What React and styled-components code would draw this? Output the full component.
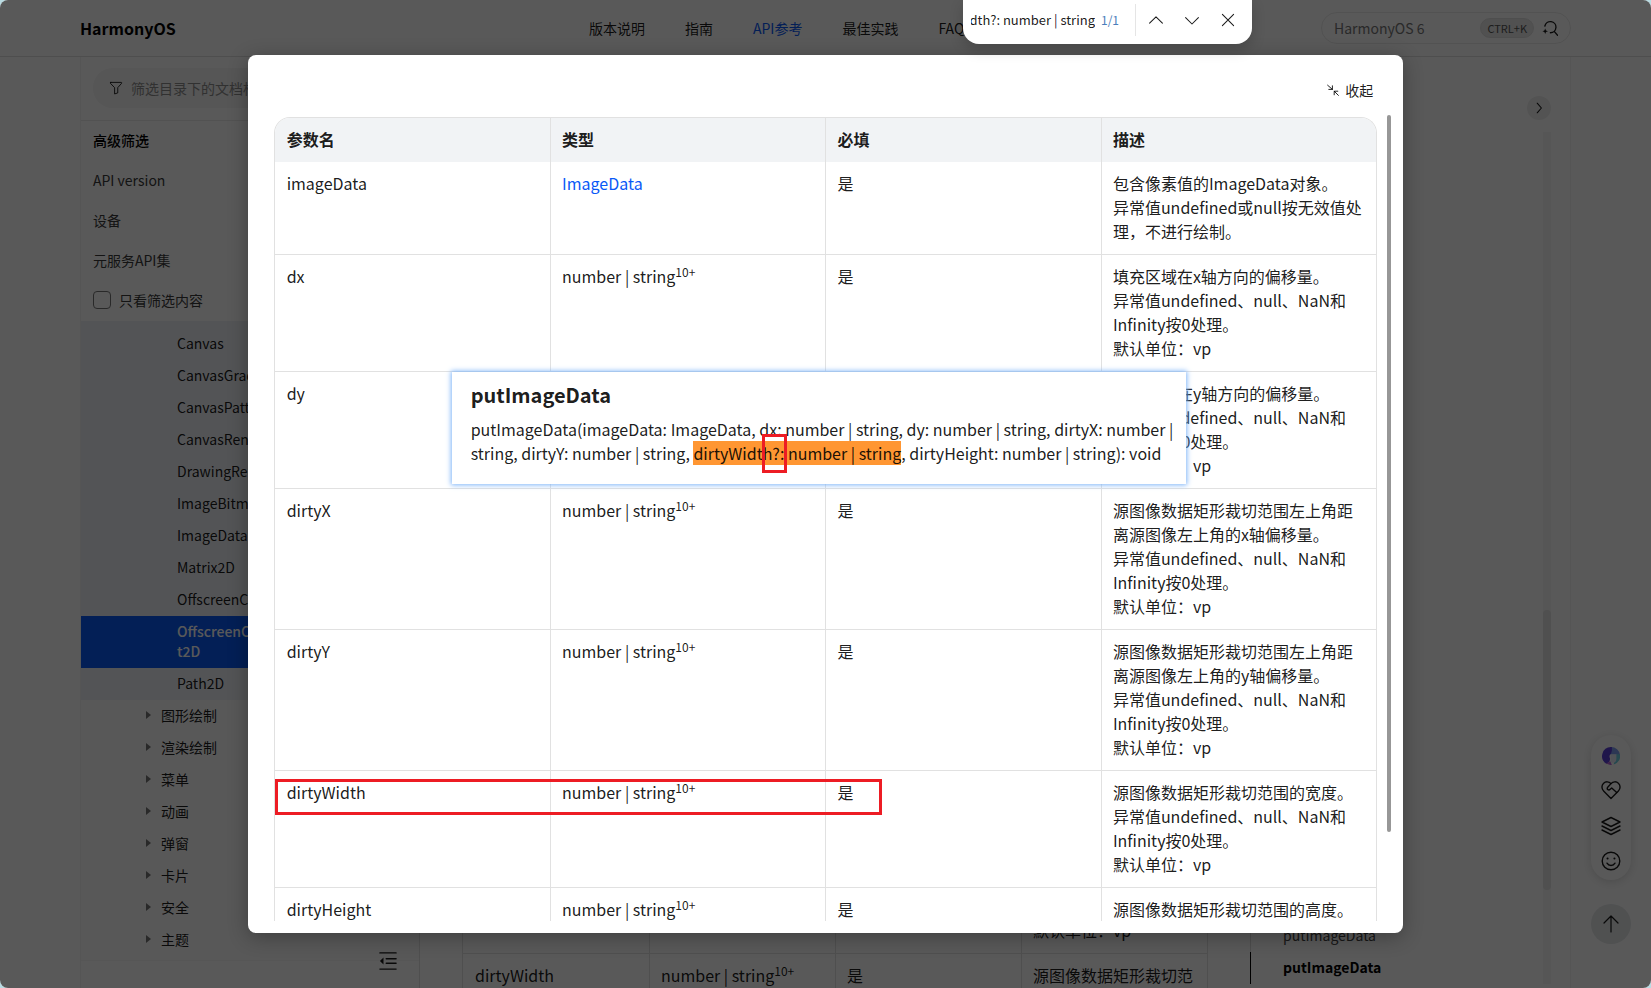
import React, { useState } from "react";
import styled, { createGlobalStyle } from "styled-components";

const GlobalStyle = createGlobalStyle`
  * {
    box-sizing: border-box;
  }

  html,
  body,
  #root {
    height: 100%;
    margin: 0;
  }

  body {
    background-color: #b9dbe2;
    color: rgba(0, 0, 0, 0.9);
    font-family: "Noto Sans CJK SC", "Noto Sans", sans-serif;
    font-size: 14px;
    line-height: 20px;
    overflow: hidden;
  }

  button,
  input {
    font: inherit;
    color: inherit;
  }

  a {
    color: inherit;
    text-decoration: none;
  }
`;

const Page = styled.div`
  position: relative;
  display: flex;
  flex-direction: column;
  height: 100vh;
  border-radius: 8px;
  background-color: #fff;
  overflow: hidden;
`;

const IconButton = styled.button`
  display: flex;
  align-items: center;
  justify-content: center;
  padding: 0;
  border: none;
  background: none;
  cursor: pointer;
`;

/* ---------- header ---------- */

const Header = styled.header`
  display: flex;
  align-items: center;
  flex-shrink: 0;
  height: 57px;
  padding: 0 80px;
  border-bottom: 1px solid #e0e0e0;
`;

const Logo = styled.a`
  flex: 0 0 509px;
  font-size: 16px;
  font-weight: 700;
  color: #000;
`;

const Nav = styled.nav`
  display: flex;
  gap: 40px;
`;

const NavLink = styled.a`
  white-space: nowrap;
  color: ${(props) => (props.$active ? "#0a59f7" : "inherit")};
`;

const Search = styled.div`
  display: flex;
  align-items: center;
  gap: 8px;
  width: 250px;
  height: 32px;
  margin-left: auto;
  padding: 0 12px;
  border: 1px solid #eaeaea;
  border-radius: 16px;

  input {
    flex: 1;
    min-width: 0;
    padding: 0;
    border: none;
    outline: none;
    background: none;
  }

  input::placeholder {
    color: #777;
    opacity: 1;
  }
`;

const Shortcut = styled.kbd`
  padding: 0 6px;
  border: 1px solid #e0e0e0;
  border-radius: 10px;
  background-color: #e7e7e7;
  font: inherit;
  font-size: 11px;
  line-height: 18px;
  color: #555;
`;

/* ---------- sidebar ---------- */

const Container = styled.div`
  display: flex;
  flex: 1;
  min-height: 0;
  margin: 0 80px;
  border: solid #f4f4f4;
  border-width: 0 1px;
`;

const Sidebar = styled.aside`
  position: relative;
  display: flex;
  flex-direction: column;
  flex: 0 0 339px;
  border-right: 1px solid #e2e2e2;
`;

const FilterArea = styled.div`
  padding: 11px 12px 12px;
  border-bottom: 1px solid #ececec;
`;

const FilterBox = styled.label`
  display: flex;
  align-items: center;
  gap: 8px;
  height: 40px;
  padding: 0 16px;
  border-radius: 20px;
  background-color: #f5f5f5;

  input {
    flex: 1;
    min-width: 0;
    padding: 0;
    border: none;
    outline: none;
    background: none;
  }

  input::placeholder {
    color: #8e8e8e;
    opacity: 1;
  }
`;

const FilterRow = styled.div`
  display: flex;
  align-items: center;
  flex-shrink: 0;
  height: 40px;
  padding: 0 12px 2px;
  font-weight: ${(props) => (props.$title ? 500 : 400)};
  color: ${(props) => (props.$title ? "#000" : "#3a3a3a")};

  label {
    display: flex;
    align-items: center;
    gap: 8px;
  }

  input {
    appearance: none;
    width: 18px;
    height: 18px;
    margin: 0;
    border: 1px solid #777;
    border-radius: 4px;
  }
`;

const Tree = styled.ul`
  flex: 1;
  min-height: 0;
  margin: 0 0 27px;
  padding: 0;
  border-bottom: 1px solid #f7f7f7;
  background-color: #fbfbfb;
  list-style: none;
  overflow: hidden;
`;

const TreeGroup = styled.ul`
  margin: 0;
  padding: 7px 0 0;
  background-color: #edf0f5;
  list-style: none;
`;

const TreeLeaf = styled.li`
  padding: 5px 12px 7px 96px;
  background-color: ${(props) => (props.$active ? "#0a59f7" : "transparent")};
  font-weight: ${(props) => (props.$active ? 500 : 400)};
  color: ${(props) => (props.$active ? "#fff" : "inherit")};
  word-break: break-all;
`;

const TreeBranch = styled.li`
  display: flex;
  align-items: center;
  gap: 10px;
  height: 32px;
  padding: 0 0 2px 65px;

  &::before {
    content: "";
    border: solid transparent;
    border-width: 4px 0 4px 5px;
    border-left-color: #777;
  }
`;

const CollapseButton = styled(IconButton)`
  position: absolute;
  right: 22px;
  bottom: 18px;
`;

/* ---------- article behind the dialog ---------- */

const Main = styled.main`
  display: flex;
  flex-direction: column;
  justify-content: flex-end;
  flex: 1;
  min-width: 0;
  padding: 0 42px;
  overflow: hidden;
`;

const Toc = styled.nav`
  display: flex;
  flex-direction: column;
  justify-content: flex-end;
  flex: 0 0 277px;
  padding-bottom: 4px;
`;

const TocLink = styled.a`
  padding: 5px 0 7px 32px;
  border-left: 1px solid ${(props) => (props.$active ? "#000" : "#dcdcdc")};
  font-weight: ${(props) => (props.$active ? 700 : 400)};
  color: ${(props) => (props.$active ? "#000" : "#444")};
`;

const TocTools = styled.div`
  display: flex;
  flex-direction: column;
  align-items: flex-end;
  gap: 12px;
  width: 24px;
  margin-right: 19px;
  padding: 39px 0 4px;
`;

const TocToggle = styled(IconButton)`
  width: 24px;
  height: 24px;
  border-radius: 50%;
  background-color: #eee;
`;

const TocTrack = styled.div`
  display: flex;
  flex-direction: column;
  justify-content: flex-end;
  flex: 1;
  width: 8px;
  padding-bottom: 94px;
  background-color: #f7f7f7;

  &::after {
    content: "";
    height: 37%;
    border-radius: 4px;
    background-color: #e4e4e4;
  }
`;

const SideTools = styled.div`
  position: absolute;
  right: 20px;
  bottom: 44px;
  display: flex;
  flex-direction: column;
  gap: 24px;
`;

const ToolStack = styled.div`
  display: flex;
  flex-direction: column;
  align-items: center;
  justify-content: space-between;
  width: 40px;
  height: 145px;
  padding: 12px 0 9px;
  border-radius: 20px;
  background-color: #fff;
  box-shadow: 0 2px 10px rgba(0, 0, 0, 0.15);
`;

const TopButton = styled(IconButton)`
  width: 40px;
  height: 40px;
  border-radius: 50%;
  background-color: #e4e7e9;
`;

/* ---------- parameter table ---------- */

const Table = styled.table`
  width: 100%;
  table-layout: fixed;
  border: solid #e1e1e1;
  border-width: 1px 1px 0;
  border-radius: ${(props) => (props.$rounded ? "16px 16px 0 0" : "0")};
  border-collapse: separate;
  border-spacing: 0;
  font-size: 16px;
  line-height: 24px;
  overflow: hidden;

  th,
  td {
    padding: 9px 11px 11px 12px;
    text-align: left;
    vertical-align: top;
  }

  th {
    background-color: #f1f3f5;
    font-weight: 700;
  }

  td {
    border-bottom: 1px solid #e1e1e1;
  }

  th + th,
  td + td {
    padding-left: 11px;
    border-left: 1px solid #e1e1e1;
  }

  tr.cut td {
    padding-bottom: 1px;
    border-bottom: none;
  }

  a {
    color: #0a59f7;
  }

  sup {
    font-size: 12px;
    line-height: 0;
    vertical-align: 6px;
  }
`;

/* ---------- dialog ---------- */

const Overlay = styled.div`
  position: absolute;
  inset: 0;
  padding: 55px 15%;
  background-color: rgba(0, 0, 0, 0.65);
`;

const Dialog = styled.section`
  position: relative;
  display: flex;
  flex-direction: column;
  height: 100%;
  border-radius: 8px;
  background-color: #fff;
  box-shadow: 0 4px 20px rgba(0, 0, 0, 0.3);
`;

const DialogHeader = styled.div`
  display: flex;
  justify-content: flex-end;
  padding: 25px 30px 15px;

  button {
    gap: 6px;
  }
`;

const DialogBody = styled.div`
  display: flex;
  gap: 10px;
  flex: 1;
  min-height: 0;
  padding: 0 12px 12px 26px;
`;

const TableScroll = styled.div`
  flex: 1;
  padding-top: 2px;
  overflow: hidden;
`;

const ScrollThumb = styled.div`
  width: 4px;
  height: 89%;
  border-radius: 2px;
  background-color: #979797;
`;

const Signature = styled.div`
  position: absolute;
  top: 317px;
  left: 204px;
  width: 734px;
  height: 112px;
  padding: 9px 8px 0 19px;
  background-color: #fff;
  box-shadow: 0 0 5px 1px #7eb4f8;
  font-size: 16px;
  line-height: 24px;

  h4 {
    margin: 0 0 8px;
    font-size: 20px;
    line-height: 28px;
  }

  p {
    margin: 0;
  }

  mark {
    background-color: #ff9632;
    color: inherit;
  }
`;

const RowMark = styled.div`
  position: absolute;
  top: 724px;
  left: 27px;
  width: 607px;
  height: 36px;
  border: 3px solid #ed1c24;
`;

const CharMark = styled.div`
  position: absolute;
  top: 62px;
  left: 310px;
  width: 25px;
  height: 39px;
  border: 3px solid #ed1c24;
`;

/* ---------- find bar ---------- */

const FindBar = styled.div`
  position: absolute;
  top: 0;
  right: 399px;
  display: flex;
  align-items: center;
  width: 289px;
  height: 44px;
  padding: 0 14px 4px 8px;
  border-radius: 0 0 16px 16px;
  background-color: #fff;
  box-shadow: 0 6px 14px rgba(0, 0, 0, 0.18);
  font-size: 13px;

  output {
    margin-left: 6px;
    font-size: 12px;
    color: #4a7ebb;
  }
`;

const FindText = styled.div`
  display: flex;
  justify-content: flex-end;
  width: 124px;
  overflow: hidden;
  white-space: nowrap;
`;

const FindButtons = styled.div`
  display: flex;
  justify-content: space-between;
  flex: 1;
  margin-left: 16px;
  padding: 8px 2px 8px 12px;
  border-left: 1px solid #e5e5e5;
`;

const navItems = ["版本说明", "指南", "API参考", "最佳实践", "FAQ"];

const filters = ["API version", "设备", "元服务API集"];

const leaves = [
  "Canvas",
  "CanvasGradient",
  "CanvasPattern",
  "CanvasRenderingContext2D",
  "DrawingRenderingContext",
  "ImageBitmap",
  "ImageData",
  "Matrix2D",
  "OffscreenCanvas",
  "OffscreenCanvasRenderingContext2D",
  "Path2D",
];

const branches = ["图形绘制", "渲染绘制", "菜单", "动画", "弹窗", "卡片", "安全", "主题"];

const invalid = "异常值undefined、null、NaN和Infinity按0处理。";
const unit = "默认单位：vp";

const params = [
  {
    name: "imageData",
    link: "ImageData",
    desc: ["包含像素值的ImageData对象。", "异常值undefined或null按无效值处理，不进行绘制。"],
  },
  { name: "dx", desc: ["填充区域在x轴方向的偏移量。", invalid, unit] },
  { name: "dy", desc: ["填充区域在y轴方向的偏移量。", invalid, unit] },
  { name: "dirtyX", desc: ["源图像数据矩形裁切范围左上角距离源图像左上角的x轴偏移量。", invalid, unit] },
  { name: "dirtyY", desc: ["源图像数据矩形裁切范围左上角距离源图像左上角的y轴偏移量。", invalid, unit] },
  { name: "dirtyWidth", desc: ["源图像数据矩形裁切范围的宽度。", invalid, unit] },
  { name: "dirtyHeight", desc: ["源图像数据矩形裁切范围的高度。", invalid, unit] },
];

const pageParams = [
  params[4],
  { name: "dirtyWidth", desc: ["源图像数据矩形裁切范"], cut: true },
];

const Svg = ({ size = 20, width = 1, children }) => (
  <svg
    width={size}
    height={size}
    viewBox="0 0 20 20"
    fill="none"
    stroke="currentColor"
    strokeWidth={width}
    strokeLinecap="round"
    strokeLinejoin="round"
    aria-hidden="true"
  >
    {children}
  </svg>
);

function ParamRow({ item }) {
  return (
    <tr className={item.cut ? "cut" : undefined}>
      <td>{item.name}</td>
      <td>
        {item.link ? (
          <a href="#imagedata">{item.link}</a>
        ) : (
          <>
            number | string<sup>10+</sup>
          </>
        )}
      </td>
      <td>是</td>
      <td>
        {item.desc.map((line) => (
          <div key={line}>{line}</div>
        ))}
      </td>
    </tr>
  );
}

function SideBar() {
  const [onlyFiltered, setOnlyFiltered] = useState(false);

  return (
    <Sidebar>
      <FilterArea>
        <FilterBox>
          <Svg size={14} width={1.3}>
            <path d="M2.500 2h15c.7 0 1 .8.500 1.300L12.500 9.500V17L8 18.500v-9L2 3.300C1.600 2.800 1.800 2 2.500 2z" />
          </Svg>
          <input aria-label="筛选目录" placeholder="筛选目录下的文档标题" />
        </FilterBox>
      </FilterArea>
      <FilterRow $title>高级筛选</FilterRow>
      {filters.map((text) => (
        <FilterRow key={text}>{text}</FilterRow>
      ))}
      <FilterRow>
        <label>
          <input
            type="checkbox"
            checked={onlyFiltered}
            onChange={(e) => setOnlyFiltered(e.target.checked)}
          />
          只看筛选内容
        </label>
      </FilterRow>
      <Tree>
        <li>
          <TreeGroup>
            {leaves.map((text) => (
              <TreeLeaf key={text} $active={text === "OffscreenCanvasRenderingContext2D"}>
                {text}
              </TreeLeaf>
            ))}
          </TreeGroup>
        </li>
        {branches.map((text) => (
          <TreeBranch key={text}>{text}</TreeBranch>
        ))}
      </Tree>
      <CollapseButton aria-label="收起目录">
        <Svg size={18} width={1.5}>
          <path d="M1 1h18M8 7.500h11M8 12.500h11M1 19h18" />
          <path d="M5 6v8L1 10z" fill="currentColor" stroke="none" />
        </Svg>
      </CollapseButton>
    </Sidebar>
  );
}

function FloatingTools() {
  return (
    <SideTools>
      <ToolStack>
        <IconButton aria-label="智能助手">
          <Svg size={18}>
            <g stroke="none">
              <path d="M10 0a10 10 0 0 1 10 9l-6-.5H9V0z" fill="#7f9df0" />
              <path d="M20 8a10 10 0 0 1-7 11.500L14 13l2-5z" fill="#6fd0e2" />
              <path d="M10 0A10 10 0 0 0 5 18.600c2-.6 4-2.600 4-5.600-1-2-1-4 1-5.500L11 4V0z" fill="#5a3fd6" />
              <path d="M4 17.900c2 1.600 5 2.400 7 2l-2-4.400c-1.500 1-3 2.400-5 2.400z" fill="#b565d8" />
              <path d="M9.500 8H16v5c0 3-1.500 4.500-3.500 4.500h-2C9 16 9.500 14 9.500 12z" fill="#e6ecf8" />
            </g>
          </Svg>
        </IconButton>
        <IconButton aria-label="反馈">
          <Svg width={1.4}>
            <path d="M10 18.500 2.600 11C.4 8.800.4 5.200 2.600 3.200 4.700 1.200 8 1.400 10 3.600c2-2.200 5.300-2.400 7.400-.4 2.200 2 2.200 5.600 0 7.800L10 18.500z" />
            <path d="M10 3.600 6.700 7.200c-.8.900-.6 2 .2 2.500.8.500 1.700.2 2.300-.4l1.500-1.400 5 4.600" />
          </Svg>
        </IconButton>
        <IconButton aria-label="资源">
          <Svg width={1.4}>
            <path d="M10 1.500 19 6l-9 4.500L1 6z" />
            <path d="m1 10 9 4.500 9-4.500M1 14l9 4.500 9-4.500" />
          </Svg>
        </IconButton>
        <IconButton aria-label="评价">
          <Svg width={1.4}>
            <circle cx="10" cy="10" r="8.800" />
            <path d="M6 12.200c.9 1.500 2.300 2.300 4 2.300s3.100-.8 4-2.300" />
            <path d="M6.500 7.500h.1M13.400 7.500h.1" strokeWidth="2" />
          </Svg>
        </IconButton>
      </ToolStack>
      <TopButton aria-label="返回顶部">
        <Svg size={20} width={1.2}>
          <path d="M10 18V2M3 9l7-7 7 7" />
        </Svg>
      </TopButton>
    </SideTools>
  );
}

function ParamDialog() {
  return (
    <Overlay>
      <Dialog role="dialog" aria-label="参数">
        <DialogHeader>
          <IconButton>
            <Svg size={12} width={1.6}>
              <path d="M1 2l8 7M9 3v6H3M19 19l-7-7M12 18v-6h6" />
            </Svg>
            收起
          </IconButton>
        </DialogHeader>
        <DialogBody>
          <TableScroll>
            <Table $rounded>
              <thead>
                <tr>
                  <th>参数名</th>
                  <th>类型</th>
                  <th>必填</th>
                  <th>描述</th>
                </tr>
              </thead>
              <tbody>
                {params.map((item) => (
                  <ParamRow key={item.name} item={item} />
                ))}
              </tbody>
            </Table>
          </TableScroll>
          <ScrollThumb />
        </DialogBody>
        <Signature>
          <h4>putImageData</h4>
          <p>
            putImageData(imageData: ImageData, dx: number | string, dy: number | string, dirtyX:
            number | string, dirtyY: number | string, <mark>dirtyWidth?: number | string</mark>,
            dirtyHeight: number | string): void
          </p>
          <CharMark />
        </Signature>
        <RowMark />
      </Dialog>
    </Overlay>
  );
}

function Find() {
  return (
    <FindBar role="search">
      <FindText>
        <span>dirtyWidth?: number | string</span>
      </FindText>
      <output>1/1</output>
      <FindButtons>
        <IconButton aria-label="上一个">
          <Svg size={16} width={1.3}>
            <path d="m2 14 8-8 8 8" />
          </Svg>
        </IconButton>
        <IconButton aria-label="下一个">
          <Svg size={16} width={1.3}>
            <path d="m2 7 8 8 8-8" />
          </Svg>
        </IconButton>
        <IconButton aria-label="关闭">
          <Svg size={16} width={1.3}>
            <path d="m3 3 14 14M17 3 3 17" />
          </Svg>
        </IconButton>
      </FindButtons>
    </FindBar>
  );
}

export default function App() {
  return (
    <>
      <GlobalStyle />
      <Page>
        <Header>
          <Logo href="#home">HarmonyOS</Logo>
          <Nav>
            {navItems.map((text) => (
              <NavLink key={text} href="#nav" $active={text === "API参考"}>
                {text}
              </NavLink>
            ))}
          </Nav>
          <Search>
            <input aria-label="搜索" placeholder="HarmonyOS 6" />
            <Shortcut>CTRL+K</Shortcut>
            <Svg size={16} width={1.7}>
              <path d="M3.600 7.500a7 7 0 1 1 6.900 8.500M15.500 14.500l4 4.500" />
              <path
                d="M4 10.500l1 2.500 2.500 1L5 15l-1 2.500L3 15l-2.500-1L3 13z"
                fill="currentColor"
                stroke="none"
              />
            </Svg>
          </Search>
        </Header>
        <Container>
          <SideBar />
          <Main>
            <Table>
              <tbody>
                {pageParams.map((item) => (
                  <ParamRow key={item.name} item={item} />
                ))}
              </tbody>
            </Table>
          </Main>
          <Toc>
            <TocLink href="#put-1">putImageData</TocLink>
            <TocLink href="#put-2" $active>
              putImageData
            </TocLink>
          </Toc>
          <TocTools>
            <TocToggle aria-label="收起导航">
              <Svg size={12} width={1.8}>
                <path d="m7 2 7 8-7 8" />
              </Svg>
            </TocToggle>
            <TocTrack />
          </TocTools>
        </Container>
        <FloatingTools />
        <ParamDialog />
        <Find />
      </Page>
    </>
  );
}
